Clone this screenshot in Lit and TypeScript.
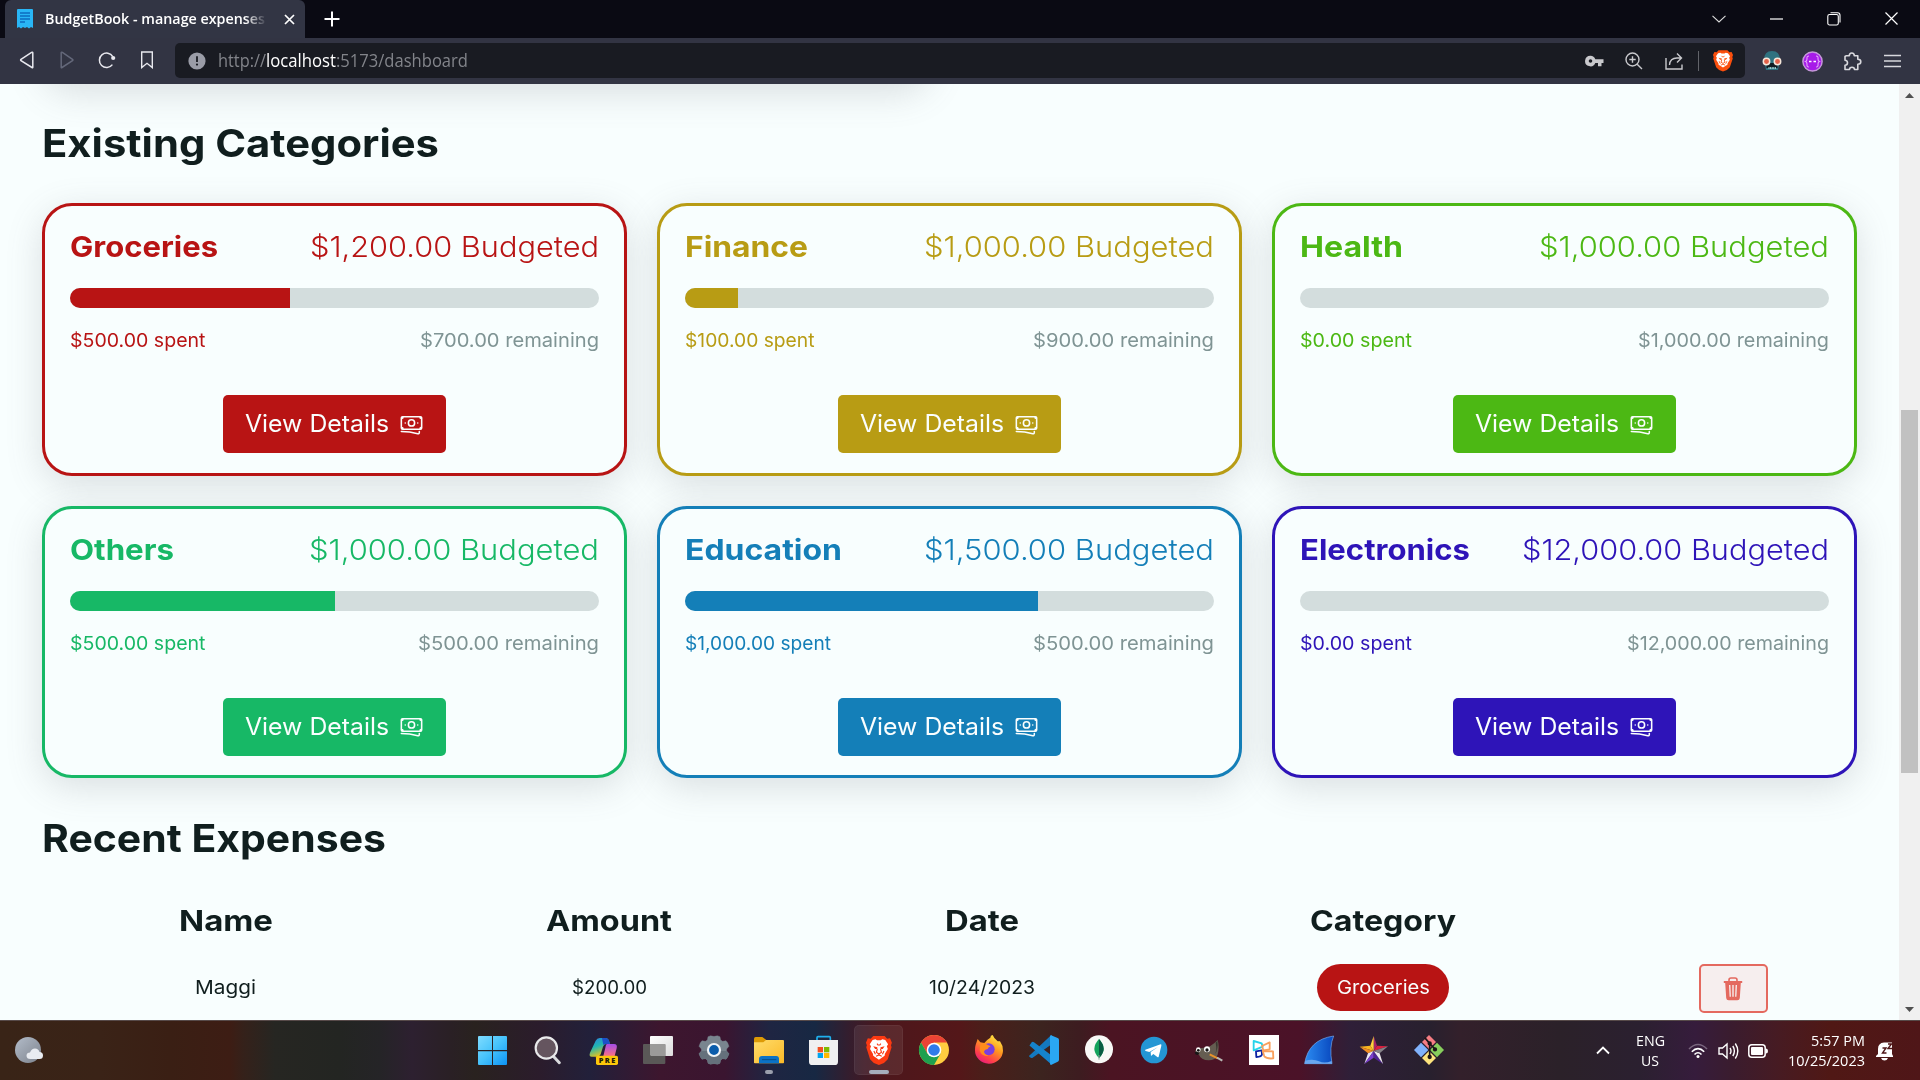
import { LitElement, html, svg, css } from "lit";
import { customElement, property } from "lit/decorators.js";

/** Text stretched or condensed horizontally so that it takes up exactly `w` pixels. */
@customElement("fit-text")
class FitText extends LitElement {
  @property({ type: Number }) w = 0;
  static styles = css`
    :host { display: inline-block; white-space: pre; }
    .t { display: inline-block; transform-origin: 0 50%; }
  `;
  updated() {
    const el = this.renderRoot.querySelector(".t") as HTMLElement;
    if (!this.w) return;
    el.style.transform = "none";
    this.style.width = "auto";
    const natural = el.getBoundingClientRect().width;
    if (!natural) return;
    el.style.transform = `scaleX(${this.w / natural})`;
    this.style.width = this.w + "px";
  }
  render() {
    return html`<span class="t"><slot></slot></span>`;
  }
}

interface Budget {
  name: string; nameW: number; total: string; totalW: number; spent: string; spentW: number;
  left: string; leftW: number; pct: number; color: string;
}

const BUDGETS: Budget[] = [
  { name: "Groceries", nameW: 148, total: "$1,200.00 Budgeted", totalW: 289, spent: "$500.00 spent", spentW: 135.5, left: "$700.00 remaining", leftW: 179, pct: 41.67, color: "#b81414" },
  { name: "Finance", nameW: 123, total: "$1,000.00 Budgeted", totalW: 290, spent: "$100.00 spent", spentW: 129.5, left: "$900.00 remaining", leftW: 181, pct: 10, color: "#b89c14" },
  { name: "Health", nameW: 103, total: "$1,000.00 Budgeted", totalW: 290, spent: "$0.00 spent", spentW: 112, left: "$1,000.00 remaining", leftW: 191, pct: 0, color: "#4cb814" },
  { name: "Others", nameW: 104, total: "$1,000.00 Budgeted", totalW: 290, spent: "$500.00 spent", spentW: 135.5, left: "$500.00 remaining", leftW: 181, pct: 50, color: "#17b866" },
  { name: "Education", nameW: 157, total: "$1,500.00 Budgeted", totalW: 290, spent: "$1,000.00 spent", spentW: 146, left: "$500.00 remaining", leftW: 181, pct: 66.7, color: "#147fb8" },
  { name: "Electronics", nameW: 170, total: "$12,000.00 Budgeted", totalW: 307, spent: "$0.00 spent", spentW: 112, left: "$12,000.00 remaining", leftW: 202, pct: 0, color: "#2e14b8" },
];

const banknotes = svg`<svg width="25" height="25" viewBox="0 0 24 24" fill="none" stroke="currentColor" stroke-width="1.5" stroke-linecap="round" stroke-linejoin="round"><path d="M2.25 18.75a60.07 60.07 0 0115.797 2.101c.727.198 1.453-.342 1.453-1.096V18.75M3.75 4.5v.75A.75.75 0 013 6h-.75m0 0v-.375c0-.621.504-1.125 1.125-1.125H20.25M2.25 6v9m18-10.5v.75c0 .414.336.75.75.75h.75m-1.5-1.5h.375c.621 0 1.125.504 1.125 1.125v9.75c0 .621-.504 1.125-1.125 1.125h-.375m1.5-1.5H21a.75.75 0 00-.75.75v.75m0 0H3.75m0 0h-.375a1.125 1.125 0 01-1.125-1.125V15m1.5 1.5v-.75A.75.75 0 003 15h-.75M15 10.5a3 3 0 11-6 0 3 3 0 016 0zm3 0h.008v.008H18V10.5zm-12 0h.008v.008H6V10.5z"/></svg>`;

@customElement("budget-card")
class BudgetCard extends LitElement {
  @property({ attribute: false }) b!: Budget;
  static styles = css`
    :host { display: block; }
    .card { box-sizing: border-box; height: 272.5px; border: 3px solid; border-radius: 30px; padding: 18px 25px 0;
      background: #f8fefe; box-shadow: 0 9px 36px rgba(100, 100, 111, 0.2); display: flex; flex-direction: column; }
    .row { display: flex; justify-content: space-between; }
    .top { font-size: 29px; line-height: 45px; height: 45px; }
    .name { font-weight: 700; }
    .total { font-weight: 350; }
    .bar { height: 20px; margin: 19px 0 18px; border-radius: 10px; background: #d3dddd; overflow: hidden; }
    .fill { height: 20px; background: currentColor; }
    .sub { font-size: 19px; line-height: 30px; height: 30px; font-weight: 380; }
    .left { color: #7f9494; }
    .btn { align-self: center; width: 223px; height: 58px; box-sizing: border-box; margin-top: 39px; border-radius: 5px; display: flex;
      align-items: center; justify-content: center; gap: 10px; }
    .label { color: #fafefe; font-size: 24px; line-height: 58px; height: 58px; }
    .btn svg { color: #fafefe; display: block; }
  `;
  render() {
    const b = this.b;
    return html`<div class="card" style="color:${b.color}">
      <div class="row top"><fit-text class="name" .w=${b.nameW}>${b.name}</fit-text><fit-text class="total" .w=${b.totalW}>${b.total}</fit-text></div>
      <div class="bar"><div class="fill" style="width:${b.pct}%"></div></div>
      <div class="row sub"><fit-text .w=${b.spentW}>${b.spent}</fit-text><fit-text class="left" .w=${b.leftW}>${b.left}</fit-text></div>
      <div class="btn" style="background:${b.color}"><fit-text class="label" .w=${144}>View Details</fit-text>${banknotes}</div>
    </div>`;
  }
}

const lion = svg`<path d="M25 15l9-2 5 3h12l5-3 9 2 9 13-4 6 3 8-9 14-1 6-18 12-18-12-1-6-9-14 3-8-4-6z" fill="#fff"/>`;
const lionFace = (c: string) => svg`<path d="M27 34l13 3 0 5-7 0zM63 34l-13 3 0 5 7 0z" fill="${c}"/><path d="M39 26L42 30H48L51 26M40 42L37 52 45 57 53 52 50 42M36 64L45 60 54 64M29 48L34 58M61 48L56 58" fill="none" stroke="${c}" stroke-width="3.500"/>`;
const shield = "M27 3h36l8 8 9-1 6 13-3 8 2 6-12 36-12 11-16 6-16-6-12-11L5 37l2-6-3-8 6-13 9 1z";

const TASKS = [
  svg`<defs><linearGradient id="w" x1="0" y1="0" x2="1" y2="1"><stop offset="0" stop-color="#7fdcff"/><stop offset=".5" stop-color="#45c2fb"/><stop offset="1" stop-color="#0d93f5"/></linearGradient></defs><path d="M4 3H44V45H2V5zM47 3H87L89 5V45H47zM2 49H44V90H4L2 88zM47 49H89V88L87 90H47z" fill="url(#w)"/>`,
  svg`<path d="M65 66L81 83" stroke="#d9dadd" stroke-width="9" stroke-linecap="round"/><circle cx="42" cy="39" r="32" fill="#65555f" stroke="#e9e9eb" stroke-width="6.500"/>`,
  svg`<defs><linearGradient id="c1" x1="0" y1="0" x2=".4" y2="1"><stop offset="0" stop-color="#2b7fe0"/><stop offset=".5" stop-color="#21b6b2"/><stop offset="1" stop-color="#e8c21c"/></linearGradient><linearGradient id="c2" x1="0" y1="0" x2="0" y2="1"><stop offset="0" stop-color="#a44de8"/><stop offset="1" stop-color="#fb6f83"/></linearGradient></defs><path d="M25 17Q29 9 37 9H55Q63 9 66 20L68 27H56Q50 27 47 35L40 58Q37 65 29 65H13Q4 65 8 53z" fill="url(#c1)"/><path d="M44 9H55Q63 9 66 20L68 27H56Q50 27 48 30z" fill="#1c50c8"/><path d="M58 27H80Q91 27 88 40L82 63H48L54 38Q55 30 58 27z" fill="url(#c2)"/><rect x="26" y="62" width="66" height="28" rx="5" fill="#fcc70a"/><text x="59" y="84" font-family="Open Sans, sans-serif" font-weight="800" font-size="22" text-anchor="middle" textLength="50" fill="#221c08">PRE</text>`,
  svg`<defs><linearGradient id="tv" x1="0" y1="0" x2="1" y2="1"><stop offset="0" stop-color="#fff"/><stop offset="1" stop-color="#dcdcdc"/></linearGradient></defs><rect x="23" y="3" width="69" height="60" rx="3" fill="url(#tv)"/><rect x="2" y="27" width="67" height="60" rx="3" fill="#5a5857"/><path d="M23 27H69V63H26L23 60z" fill="#9b9a99"/>`,
  svg`<path d="M40 2L48 4H52L60 2 68 5 70 15 76 19 86 17 91 23 95 34 88 42V48L95 56 91 66 86 73 76 71 70 75 68 85 60 88 52 86H48L40 88 32 85 30 75 24 71 14 73 9 66 5 56 12 48V42L5 34 9 23 14 17 24 19 30 15 32 5z" fill="#79858f" stroke="#79858f" stroke-width="1"/><path d="M5 56L12 48H88L95 56 91 66 86 73 76 71 70 75 68 85 60 88 52 86H48L40 88 32 85 30 75 24 71 14 73 9 66z" fill="#65717c"/><circle cx="50" cy="45" r="18" fill="#0a5cab" stroke="#f0f4f7" stroke-width="6.500"/>`,
  svg`<defs><linearGradient id="f" x1="0" y1="0" x2="1" y2="1"><stop offset="0" stop-color="#ffdc6b"/><stop offset="1" stop-color="#fbb927"/></linearGradient></defs><path d="M5 12Q5 6 10 6H30L42 15H92V45H5z" fill="#dd9a05"/><path d="M5 22H33L41 15H93L95 17V83L93 85H7L5 83z" fill="url(#f)"/><path d="M20 85V72Q20 63 29 63H72Q80 63 80 72V85z" fill="#0b72c5"/><path d="M29 74H72" stroke="#064c87" stroke-width="3"/>`,
  svg`<path d="M29 17V8Q29 5 32 5H66Q69 5 69 8V17" fill="none" stroke="#1fb0ee" stroke-width="5"/><path d="M5 15H92V80Q92 90 82 90H15Q5 90 5 80z" fill="#f0f0f1"/><path d="M31 36H47V52H31z" fill="#f25022"/><path d="M50 36H66V52H50z" fill="#7fba00"/><path d="M31 54H47V69H31z" fill="#00a4ef"/><path d="M50 54H66V69H50z" fill="#ffb900"/>`,
  svg`<g transform="translate(7 0) scale(.95 1)"><path d="${shield}" fill="#fb3a12"/>${lion}${lionFace("#fb3a12")}</g>`,
  svg`<circle cx="50" cy="45" r="45" fill="#ffcd40"/><path d="M11 22.500A45 45 0 0 1 89 22.500H50L30.500 56z" fill="#ea4335"/><path d="M11 22.500A45 45 0 0 0 50 90L69.500 56.500 50 45 30.500 56z" fill="#1ea04f"/><circle cx="50" cy="45" r="22" fill="#fff"/><circle cx="50" cy="45" r="17.500" fill="#2f7bea"/>`,
  svg`<defs><linearGradient id="ff" x1=".8" y1="0" x2=".2" y2="1"><stop offset="0" stop-color="#fff04a"/><stop offset=".4" stop-color="#ff9a1f"/><stop offset=".75" stop-color="#ff3f4a"/><stop offset="1" stop-color="#e31587"/></linearGradient></defs><path d="M10 29L16 12 24 22 36 24Q46 12 54 8Q54 1 61 0Q64 9 76 19L83 19Q92 31 92 47A42 40 0 0 1 8 45Q8 35 10 29z" fill="url(#ff)"/><circle cx="49" cy="43" r="18" fill="#7a3fe0"/><path d="M24 29Q34 20 45 29L55 34Q48 36 46 42Q38 43 35 49Q36 60 49 62Q28 66 22 46z" fill="#ff8c1c"/>`,
  svg`<path d="M8 60L68 4 74 0V27L16 68Q12 70 8 67L5 64Q4 62 8 60z" fill="#1478be"/><path d="M8 29L13 22Q16 19 20 22L74 62V88L68 85 8 33Q5 31 8 29z" fill="#1583cc"/><path d="M71 1L91 9Q95 11 95 15V74Q95 78 91 80L71 90Q68 89 68 86V4Q68 1 71 1z" fill="#2aa7f3"/>`,
  svg`<circle cx="50" cy="43" r="42" fill="#f8f8f6"/><path d="M50 12Q78 42 50 69Q22 42 50 12z" fill="#13a35c"/><path d="M50 12Q78 42 50 69z" fill="#0a5c43"/><path d="M50 60V74" stroke="#8aa79b" stroke-width="3"/>`,
  svg`<circle cx="50" cy="45" r="40" fill="#2496d4"/><path d="M24 44L70 28Q73 28 72 32L64 65Q63 68 60 66L48 57 41 63 40 51 62 36 36 51 25 48Q22 46 24 44z" fill="#fff"/>`,
  svg`<path d="M9 46Q18 38 36 38Q55 37 76 15Q82 35 76 59Q70 76 49 76Q26 76 19 58Q9 57 9 46z" fill="#655d51"/><path d="M75 17Q79 42 67 58Q75 48 70 23z" fill="#393630"/><circle cx="18" cy="44" r="7" fill="#fff"/><circle cx="44" cy="43" r="9" fill="#fff"/><circle cx="18" cy="46" r="4" fill="#111"/><circle cx="44" cy="45" r="5" fill="#111"/><path d="M7 53Q12 46 21 55L16 60Q9 60 7 53z" fill="#161616"/><path d="M52 58L76 70" stroke="#e8932b" stroke-width="6"/><path d="M74 68L90 77" stroke="#b9b9b5" stroke-width="6"/>`,
  svg`<path d="M5 0H95V90H5z" fill="#fff"/><g fill="none" stroke-width="5.500" stroke-linejoin="round"><path d="M19 18V46L46 35 43 25z" stroke="#25d3ea"/><path d="M26 49L27 66Q43 65 44 58L43 46z" stroke="#0b22a4"/><path d="M44 33L67 22V43L48 46z" stroke="#f9a05d"/><path d="M46 48L77 49 78 70Q58 72 51 64z" stroke="#f9a05d"/></g>`,
  svg`<defs><linearGradient id="sh" x1="0" y1="0" x2="1" y2="0"><stop offset="0" stop-color="#2b8cf2"/><stop offset="1" stop-color="#0846bd"/></linearGradient></defs><path d="M7 86Q18 14 94 3Q80 35 89 86z" fill="url(#sh)" stroke="#77aced" stroke-width="2"/><path d="M8 77Q34 71 50 79T88 78L89 86H7z" fill="#6aa7ef"/>`,
  svg`<path d="M49 3L59 32 49 48z" fill="#a5246a"/><path d="M59 32L92 34 49 48z" fill="#d8213f"/><path d="M49 3V48L39 32z" fill="#ffd23d"/><path d="M39 32L7 35 49 48z" fill="#f7b520"/><path d="M7 35L32 55 49 48z" fill="#f08d24"/><path d="M32 55L21 87 49 48z" fill="#ece7f3"/><path d="M49 48V68L21 87z" fill="#7c3fd0"/><path d="M49 48V68L77 87z" fill="#4e2392"/><path d="M49 48L67 55 77 87z" fill="#ede9ef"/><path d="M49 48L92 34 67 55z" fill="#858288"/>`,
  svg`<path d="M50 0L71 21 50 42 29 21z" fill="#f57d83"/><path d="M26 23L48 45 26 67 5 45z" fill="#80b2fb"/><path d="M74 23L95 45 74 67 53 45z" fill="#87ce5c"/><path d="M50 48L71 69 50 90 29 69z" fill="#fde47d"/><g stroke="#1c1518" stroke-width="5" fill="#1c1518"><path d="M37 8L52 25V64M52 26L68 42" fill="none"/><circle cx="52" cy="25" r="4"/><circle cx="68" cy="43" r="4"/><circle cx="52" cy="66" r="4"/></g>`,
];

@customElement("app-root")
class AppRoot extends LitElement {
  static styles = css`
    :host { display: block; width: 1920px; height: 1080px; overflow: hidden; font-family: Inter, "Open Sans", sans-serif; color: #101e1e; background: #f8fefe; }
    svg { display: block; flex: none; }
    .screen { display: flex; flex-direction: column; width: 1920px; height: 1080px; }
    .strip { display: flex; height: 38px; background: #0a0a13; padding-left: 5px; flex: none; }
    .tab { width: 300px; height: 38px; box-sizing: border-box; background: #323544; border-radius: 6px 6px 0 0; display: flex; align-items: center; padding-left: 12px; }
    .ticon { margin-right: 12px; }
    .title { width: 222px; overflow: hidden; font: 600 14.5px/38px "Open Sans", sans-serif; color: #fff;
      -webkit-mask-image: linear-gradient(90deg, #000 90%, transparent 100%); mask-image: linear-gradient(90deg, #000 90%, transparent 100%); }
    .tx { margin-left: 17px; }
    .plus { margin: 11px 0 0 19px; }
    .wins { margin-left: auto; display: flex; }
    .win { width: 57.5px; height: 37px; display: grid; place-items: center; }
    .bar { height: 46px; flex: none; background: #323443; display: flex; align-items: center; padding: 0 8px 0 7px; }
    .cell { width: 40px; height: 40px; display: grid; place-items: center; flex: none; }
    .navi { margin-top: -2px; }
    .addr { margin: 0 7px 1px 8px; flex: 1; height: 35px; box-sizing: border-box; background: #191b22; border-radius: 5px; display: flex; align-items: center; padding: 0 2px 0 13px; }
    .url { margin: -2px auto 0 12px; font: 400 17.5px/34px "Open Sans", sans-serif; color: #82848a; display: flex; }
    .host { color: #fff; }
    .sep { width: 9px; height: 20px; display: flex; justify-content: center; }
    .line { width: 1px; height: 20px; background: #62646a; }
    .view { flex: 1; min-height: 0; display: flex; background: #f8fefe; overflow: hidden; }
    .page { width: 1899px; box-sizing: border-box; padding: 0 42px; overflow: hidden; }
    .ghost { width: 889px; height: 60px; margin-top: -60px; border-radius: 0 0 30px 30px; box-shadow: 0 9px 36px rgba(100, 100, 111, 0.2); }
    .h { display: block; font-size: 38.5px; font-weight: 700; line-height: 60px; height: 60px; }
    .first { margin: 29px 0 30px; }
    .second { margin: 30px 0; }
    .grid { display: grid; grid-template-columns: repeat(3, 1fr); gap: 30px; }
    .tr { display: grid; grid-template-columns: 367px 400px 346px 456px 244px; justify-items: center; }
    .th { font-size: 29px; font-weight: 700; line-height: 45px; height: 45px; }
    .td { margin-top: 21px; font-size: 18.5px; font-weight: 380; line-height: 47px; height: 49px; }
    .pill { width: 132px; height: 47px; border-radius: 24px; background: #b81414; color: #fafefe; display: flex; justify-content: center; font-weight: 400; }
    .del { width: 69px; height: 49px; box-sizing: border-box; border: 2px solid #e4695f; border-radius: 5px; background: #f6eeee; display: grid; place-items: center; }
    .scroll { width: 21px; background: #f0f0f0; display: flex; flex-direction: column; align-items: center; flex: none; }
    .up { margin-top: 9px; }
    .thumb { width: 17px; height: 363px; background: #c1c1c1; margin-top: 312px; }
    .down { margin-top: auto; margin-bottom: 8px; }
    .task { height: 60px; box-sizing: border-box; border-top: 1px solid #574a49; flex: none; display: flex; color: #fff; font-family: "Open Sans", sans-serif;
      background: linear-gradient(90deg, #392417 0px, #3a2317 100px, #3a1f14 170px, #3d1d14 230px, #35211a 243px, #262622 275px, #232522 340px, #252427 380px, #2d2030 412px, #2a2025 450px, #29221f 475px, #2b1c2c 540px, #22203a 590px, #3d162e 660px, #3a1530 725px, #1f2542 770px, #172843 815px, #351d2d 850px, #4d171c 885px, #541719 960px, #4a1f1a 985px, #3c241f 1040px, #3d1c20 1080px, #4b1422 1110px, #4b1228 1300px, #2f1f38 1350px, #28202e 1430px, #33202b 1460px, #2b2129 1560px, #2b2030 1640px, #361c3c 1695px, #3a1c2f 1730px, #471b22 1780px, #501815 1830px, #4f1618 1920px); }
    .weather { margin: 14px 0 0 13px; }
    .apps { display: flex; margin-left: 423px; }
    .app { width: 49px; height: 50px; margin: 4px 3px 0; box-sizing: border-box; border-radius: 5px; display: flex; flex-direction: column; align-items: center; padding-top: 10px; }
    .on { background: rgba(255, 255, 255, 0.08); box-shadow: inset 0 0 0 1px rgba(255, 255, 255, 0.05); }
    .dot { width: 8px; height: 4px; border-radius: 2px; background: #9a9fad; margin-top: 5px; }
    .on .dot { width: 20px; background: #a6afbd; }
    .tray { margin-left: auto; display: flex; height: 59px; align-items: center; padding-right: 26px; }
    .two { display: flex; flex-direction: column; font-size: 15px; line-height: 20px; }
    .lang { align-items: center; margin: -2px 23px 0 25px; width: 30px; }
    .clock { align-items: flex-end; width: 78px; margin: -2px 11px 0 19px; }
    .wifi { margin-right: 10px; }
    .vol { margin-right: 9px; }
  `;
  render() {
    const w = (n: number, t: string, c = "") => html`<fit-text class=${c} .w=${n}>${t}</fit-text>`;
    return html`<div class="screen">
      <div class="strip">
        <div class="tab">
          <svg class="ticon" width="16" height="20" viewBox="0 0 16 20"><path d="M0 1Q0 0 1 0H15Q16 0 16 1V19L14 18 12 19.500 10 18 8 19 6 18 4 19.500 2 18 0 19z" fill="#29b6f6"/><path d="M3 4H13M3 7H13M3 10H13M3 13H8" stroke="#0d6cc0" stroke-width="1.300"/></svg>
          <div class="title">${w(220, "BudgetBook - manage expenses")}</div>
          <svg class="tx" width="11" height="11" viewBox="0 0 11 11"><path d="M1 1L10 10M10 1L1 10" stroke="#fff" stroke-width="1.700"/></svg>
        </div>
        <svg class="plus" width="16" height="16" viewBox="0 0 16 16"><path d="M8 0.500V15.500M.5 8H15.500" stroke="#fff" stroke-width="2"/></svg>
        <div class="wins">
          <div class="win"><svg width="14" height="8" viewBox="0 0 14 8"><path d="M.5.8L7 7 13.500.8" fill="none" stroke="#ddd" stroke-width="1.100"/></svg></div>
          <div class="win"><svg width="13" height="2" viewBox="0 0 13 2"><path d="M0 1H13" stroke="#fff" stroke-width="1.200"/></svg></div>
          <div class="win"><svg width="14" height="14" viewBox="0 0 14 14" fill="none" stroke="#fff" stroke-width="1.100"><rect x=".8" y="2.500" width="10.500" height="10.500" rx="1.800"/><path d="M3.500.8H10.500Q13 .8 13 3.300V10.500"/></svg></div>
          <div class="win"><svg width="13" height="13" viewBox="0 0 13 13"><path d="M.5.5L12.500 12.500M12.500.5L.5 12.500" stroke="#fff" stroke-width="1.200"/></svg></div>
        </div>
      </div>
      <div class="bar">
        <div class="cell navi"><svg width="16" height="18" viewBox="0 0 16 18"><path d="M13.800 1.800V16.200Q13.800 17 13 16.500L2 9.700Q1.200 9 2 8.300L12.600 1.400Q13.800.7 13.800 1.800z" fill="none" stroke="#e8e8ee" stroke-width="1.500"/></svg></div>
        <div class="cell navi"><svg width="16" height="18" viewBox="0 0 16 18"><path d="M2.200 1.800V16.200Q2.200 17 3 16.500L13.500 9.700Q14.300 9 13.500 8.300L3.400 1.400Q2.200.7 2.200 1.800z" fill="none" stroke="#64687a" stroke-width="1.500"/></svg></div>
        <div class="cell navi"><svg width="18" height="18" viewBox="0 0 18 18"><path d="M14.800 5.600A7.200 7.200 0 1 0 14.400 13.600" fill="none" stroke="#e8e8ee" stroke-width="1.500"/><circle cx="15.200" cy="7" r="2.100" fill="#e8e8ee"/></svg></div>
        <div class="cell navi"><svg width="14" height="18" viewBox="0 0 14 18"><path d="M1.700 1H12.300V16.600L7 12.300 1.700 16.600z" fill="none" stroke="#e8e8ee" stroke-width="1.400"/></svg></div>
        <div class="addr">
          <svg width="18" height="18" viewBox="0 0 18 18"><circle cx="9" cy="9" r="8.600" fill="#9a9ca7"/><path d="M9 4.300V10" stroke="#191b22" stroke-width="1.800"/><circle cx="9" cy="12.600" r="1.100" fill="#191b22"/></svg>
          <div class="url">${w(48, "http://")}${w(70, "localhost", "host")}${w(132, ":5173/dashboard")}</div>
          <div class="cell"><svg width="19" height="12" viewBox="0 0 19 12"><path d="M5.500.7A5.300 5.300 0 1 0 10.300 8H13V11.300H16.500V8H18.500V4.200H10.300A5.300 5.300 0 0 0 5.500.7zM5.500 4.200a1.800 1.800 0 1 1 0 3.600 1.800 1.800 0 0 1 0-3.600z" fill="#c9c9cd"/></svg></div>
          <div class="cell"><svg width="18" height="18" viewBox="0 0 18 18" fill="none" stroke="#c9c9cd" stroke-width="1.400"><circle cx="7.500" cy="7.500" r="6.500"/><path d="M12.200 12.200L17 17M4.300 7.500H10.700M7.500 4.300V10.700"/></svg></div>
          <div class="cell"><svg width="18" height="18" viewBox="0 0 18 18" fill="none" stroke="#c9c9cd" stroke-width="1.400"><path d="M1 6V17H17V12.500M4.500 13Q5 6 12 6H16M12 1.500L16.500 6 12 10.500"/></svg></div>
          <div class="sep"><div class="line"></div></div>
          <div class="cell"><svg width="22" height="23" viewBox="0 0 90 90"><path d="${shield}" fill="#fb4f0d"/>${lion}${lionFace("#fb4f0d")}</svg></div>
        </div>
        <div class="cell"><svg width="20" height="20" viewBox="0 0 20 20"><path d="M2 9Q2 0 10 0T18 9L16 19H4z" fill="#2f7280"/><path d="M4.500 12H15.500V17H4.500z" fill="#101c22"/><path d="M6.500 17H14" stroke="#a6d7d7" stroke-width="2" stroke-dasharray="1 .6"/><circle cx="4.500" cy="10.500" r="3.200" fill="#e4624a" stroke="#f6e7da" stroke-width="1.500"/><circle cx="15.500" cy="10.500" r="3.200" fill="#e4624a" stroke="#f6e7da" stroke-width="1.500"/></svg></div>
        <div class="cell"><svg width="21" height="21" viewBox="0 0 21 21"><circle cx="10.500" cy="10.500" r="9.600" fill="#a71be8" stroke="#c597da" stroke-width="1.500"/><path d="M7 5Q4.500 5 5 8Q5 10 3.600 10.500Q5 11 5 13Q4.500 16 7 16M14 5Q16.500 5 16 8Q16 10 17.400 10.500Q16 11 16 13Q16.500 16 14 16" fill="none" stroke="#e3a8fa" stroke-width="1.100"/><path d="M7 10.500H9.500M11.500 10.500H14" stroke="#fff" stroke-width="1.500"/></svg></div>
        <div class="cell"><svg width="19" height="19" viewBox="0 0 19 19"><path d="M3 3.800H6.300Q6.300 1 8.800 1T11.300 3.800H14.800V7.300Q17.800 7.300 17.800 9.800T14.800 12.300V17.500H11.500Q11.500 15.200 9 15.200T6.500 17.500H2V13.200Q4.500 13.200 4.500 10.800T2 8.300V4.500z" fill="none" stroke="#d8d8dd" stroke-width="1.600" stroke-linejoin="round"/></svg></div>
        <div class="cell"><svg width="17" height="14" viewBox="0 0 17 14"><path d="M0 1.500H17M0 7H17M0 12.500H17" stroke="#d8d8dd" stroke-width="1.500"/></svg></div>
      </div>
      <div class="view">
        <div class="page">
          <div class="ghost"></div>
          ${w(397, "Existing Categories", "h first")}
          <div class="grid">${BUDGETS.map((b) => html`<budget-card .b=${b}></budget-card>`)}</div>
          ${w(344, "Recent Expenses", "h second")}
          <div class="tr th">${w(94, "Name")}${w(126, "Amount")}${w(74, "Date")}${w(146, "Category")}</div>
          <div class="tr td">
            ${w(61, "Maggi")}${w(75, "$200.00")}${w(106, "10/24/2023")}
            <div class="pill">${w(93, "Groceries")}</div>
            <div class="del"><svg width="20" height="24" viewBox="0 0 20 24"><path d="M6 4V3Q6 1 8 1H12Q14 1 14 3V4" fill="none" stroke="#e4695f" stroke-width="1.600"/><path d="M.8 4H19.200V6H17.800L16.800 21Q16.600 23.300 14.300 23.300H5.700Q3.400 23.300 3.200 21L2.200 6H.8zM6 8L6.600 19.800H7.900L7.400 8zM9.300 8V19.800H10.700V8zM12.600 8L12.100 19.800H13.400L14 8z" fill="#e4695f" fill-rule="evenodd"/></svg></div>
          </div>
        </div>
        <div class="scroll">
          <svg class="up" width="9" height="5" viewBox="0 0 9 5"><path d="M0 5L4.500 0 9 5z" fill="#505050"/></svg>
          <div class="thumb"></div>
          <svg class="down" width="9" height="5" viewBox="0 0 9 5"><path d="M0 0L4.500 5 9 0z" fill="#505050"/></svg>
        </div>
      </div>
      <div class="task">
        <svg class="weather" width="30" height="30" viewBox="0 0 30 30"><defs><linearGradient id="m" x1="0" y1="0" x2="1" y2="1"><stop offset="0" stop-color="#b3bcc9"/><stop offset="1" stop-color="#7d838d"/></linearGradient></defs><circle cx="15" cy="15" r="13" fill="url(#m)"/><path d="M17.500 24Q13.500 24 13.500 20.500Q13.700 17.500 17 17.500Q18.500 13.500 22 13.500Q25.500 13.500 26.500 17Q30 17.200 30 20.500Q30 24 26.500 24z" fill="#e9ecf1"/></svg>
        <div class="apps">${TASKS.map((t, i) => html`<div class="app ${i === 7 ? "on" : ""}"><svg width="30" height="30" viewBox="5 0 90 90" overflow="visible">${t}</svg>${i === 5 || i === 7 ? html`<div class="dot"></div>` : ""}</div>`)}</div>
        <div class="tray">
          <svg width="14" height="9" viewBox="0 0 14 9"><path d="M1 7.500L7 1.500 13 7.500" fill="none" stroke="#fff" stroke-width="1.800"/></svg>
          <div class="two lang">${w(29, "ENG")}${w(18, "US")}</div>
          <svg class="wifi" width="20" height="16" viewBox="0 0 20 16" fill="none" stroke="#fff" stroke-width="1.600"><path d="M1 6Q10-3 19 6" stroke="#79667e"/><path d="M3.800 8.800Q10 2.500 16.200 8.800M6.500 11.500Q10 8 13.500 11.500"/><circle cx="10" cy="13.500" r="1.500" fill="#fff" stroke="none"/></svg>
          <svg class="vol" width="21" height="18" viewBox="0 0 21 18" fill="none" stroke="#fff" stroke-width="1.400"><path d="M1 6H4.500L9 2V16L4.500 12H1z"/><path d="M12 6Q14 9 12 12M14.800 4Q18 9 14.800 14M17.300 1.500Q22.300 9 17.300 16.500"/></svg>
          <svg width="20" height="14" viewBox="0 0 20 14"><rect x=".8" y=".8" width="16.400" height="12.400" rx="3" fill="none" stroke="#fff" stroke-width="1.500"/><rect x="3" y="3" width="12" height="8" rx="1" fill="#fff"/><path d="M18 4.500Q20 4.500 20 7T18 9.500z" fill="#fff"/></svg>
          <div class="two clock">${w(54, "5:57 PM")}${w(77, "10/25/2023")}</div>
          <svg width="18" height="20" viewBox="0 0 18 20"><path d="M2 13V8Q2 2 8 1.500H16V13L17 15V16H0V15z" fill="#fff"/><path d="M5 17H12Q11 19.500 8.500 19.500T5 17z" fill="#fff"/><path d="M6.500 7H10L6.500 12H10.500M12 3H15.500L12 7.500H16" fill="none" stroke="#4f1618" stroke-width="1.400"/></svg>
        </div>
      </div>
    </div>`;
  }
}
